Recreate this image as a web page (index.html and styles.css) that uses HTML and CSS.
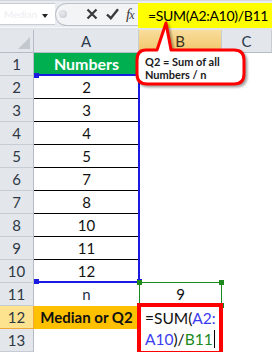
FILE: index.html
```html
<!DOCTYPE html>
<html>
<head>
<meta charset="utf-8">
<link rel="stylesheet" href="styles.css">
</head>
<body>
<div class="page">
  <div class="fbar">
    <div class="namebox"><span class="nb-text">Median</span><span class="nb-arrow"></span></div>
    <div class="tools">
      <span class="grip"></span>
      <svg class="ic ic-x" width="12" height="12" viewBox="0 0 12 12"><path d="M1.5 1.5 L10.5 10.5 M10.5 1.5 L1.5 10.5" stroke="#3a3a3a" stroke-width="2.2" fill="none"/></svg>
      <svg class="ic ic-ok" width="13" height="12" viewBox="0 0 13 12"><path d="M1 6.5 L4.8 10.2 L12 1.2" stroke="#3a3a3a" stroke-width="2.4" fill="none"/></svg>
      <span class="fx">f<span class="fx-x">x</span></span>
    </div>
    <div class="formula">=SUM(A2:A10)/B11</div>
  </div>

  <div class="grid">
    <div class="corner"><span class="tri"></span></div>
    <div class="ch">A</div>
    <div class="ch ch-sel">B</div>
    <div class="ch">C</div>

    <div class="rh">1</div><div class="ca head">Numbers</div><div class="cb"></div><div class="cc"></div>
    <div class="rh">2</div><div class="ca num">2</div><div class="cb"></div><div class="cc"></div>
    <div class="rh">3</div><div class="ca num">3</div><div class="cb"></div><div class="cc"></div>
    <div class="rh">4</div><div class="ca num">4</div><div class="cb"></div><div class="cc"></div>
    <div class="rh">5</div><div class="ca num">5</div><div class="cb"></div><div class="cc"></div>
    <div class="rh">6</div><div class="ca num">7</div><div class="cb"></div><div class="cc"></div>
    <div class="rh">7</div><div class="ca num">8</div><div class="cb"></div><div class="cc"></div>
    <div class="rh">8</div><div class="ca num">10</div><div class="cb"></div><div class="cc"></div>
    <div class="rh">9</div><div class="ca num">11</div><div class="cb"></div><div class="cc"></div>
    <div class="rh">10</div><div class="ca num">12</div><div class="cb"></div><div class="cc"></div>
    <div class="rh">11</div><div class="ca nval">n</div><div class="cb bval">9</div><div class="cc"></div>
    <div class="rh rh-sel">12</div><div class="ca median">Median or Q2</div><div class="cb"></div><div class="cc"></div>
    <div class="rh">13</div><div class="ca"></div><div class="cb"></div><div class="cc"></div>
  </div>

  <div class="range-blue">
    <span class="h h-tl"></span><span class="h h-bl"></span><span class="h h-br"></span>
  </div>
  <div class="range-green">
    <span class="g g-tl"></span><span class="g g-tr"></span><span class="g g-bl"></span><span class="g g-br"></span>
  </div>

  <div class="editor">
    <div class="ed-line"><span class="k">=SUM(</span><span class="r1">A2:</span></div>
    <div class="ed-line"><span class="r1">A10</span><span class="k">)/</span><span class="r2">B11</span><span class="caret"></span></div>
  </div>

  <div class="callout">
    <svg class="callout-shape" width="116" height="70" viewBox="0 0 116 70">
      <path d="M12 30 H23 L32 3 L37 30 H100 Q110 30 110 40 V54 Q110 64 100 64 H13 Q3 64 3 54 V40 Q3 30 12 30 Z" fill="#ffffff" stroke="#ff0000" stroke-width="3" stroke-linejoin="round"/>
    </svg>
    <div class="callout-text">Q2 = Sum of all<br>Numbers / n</div>
  </div>
</div>
</body>
</html>
```

FILE: styles.css
```css
* { box-sizing: border-box; }
html, body { margin: 0; padding: 0; }
body {
  width: 272px;
  height: 352px;
  overflow: hidden;
  background: #dfe3e8;
  font-family: "Lato", "Liberation Sans", sans-serif;
}
.page {
  position: relative;
  width: 272px;
  height: 352px;
}

/* formula bar */
.fbar {
  display: flex;
  align-items: center;
  height: 28px;
  margin-bottom: 2px;
  background: #e8ebef;
  border-top: 1px solid #d3d7dd;
  border-bottom: 1px solid #f6f7f9;
}
.namebox {
  position: relative;
  flex: 0 0 55px;
  height: 22px;
  background: #ffffff;
  border-top: 1px solid #c9cdd3;
  border-bottom: 1px solid #c9cdd3;
}
.nb-text {
  position: absolute;
  left: 4px;
  top: 4px;
  font-size: 10px;
  color: #eceef1;
}
.nb-arrow {
  position: absolute;
  left: 42px;
  top: 10px;
  width: 0;
  height: 0;
  border-left: 3.5px solid transparent;
  border-right: 3.5px solid transparent;
  border-top: 4px solid #222;
}
.tools {
  display: flex;
  align-items: center;
  flex: 0 0 83px;
  height: 23px;
  background: #f3f4f6;
  border: 1px solid #bcc2ca;
  border-right: none;
  border-radius: 12px 0 0 12px;
}
.grip {
  flex: 0 0 8px;
  height: 8px;
  margin-left: 3px;
  border-radius: 50%;
  background: radial-gradient(circle at 40% 35%, #e9ebee, #c3c8cf);
}
.ic { flex: 0 0 auto; }
.ic-x { margin-left: 19px; }
.ic-ok { margin-left: 8px; }
.fx {
  margin-left: 7px;
  font-family: "Liberation Serif", "DejaVu Serif", serif;
  font-style: italic;
  font-size: 15px;
  color: #3a3a3a;
  letter-spacing: -1px;
}
.fx-x { font-size: 12px; }
.formula {
  flex: 1 1 auto;
  min-width: 0;
  overflow: hidden;
  white-space: nowrap;
  height: 25px;
  margin-top: 2px;
  background: #ffff00;
  font-size: 14px;
  letter-spacing: -0.3px;
  line-height: 25px;
  padding-left: 10px;
  color: #000;
}

/* grid */
.grid {
  display: grid;
  grid-template-columns: 34px 105px 83px 1fr;
  grid-template-rows: repeat(14, 23px);
  background: #ffffff;
}
.corner {
  position: relative;
  background: #e3e7ec;
  border-right: 1px solid #b5bcc6;
  border-bottom: 1px solid #b5bcc6;
}
.tri {
  position: absolute;
  right: 3px;
  bottom: 3px;
  width: 0;
  height: 0;
  border-left: 12px solid transparent;
  border-bottom: 12px solid #c3c8cf;
}
.ch {
  background: #e3e7ec;
  border-right: 1px solid #c7ccd4;
  border-bottom: 1px solid #b5bcc6;
  text-align: center;
  font-size: 15px;
  line-height: 22px;
  color: #2c3a4c;
}
.ch-sel {
  background: linear-gradient(#f9dd9c, #f1c66a);
  border-bottom: 1px solid #e4a43a;
  color: #3a3320;
}
.rh {
  background: #e3e7ec;
  border-right: 1px solid #b5bcc6;
  border-bottom: 1px solid #c7ccd4;
  text-align: center;
  font-size: 15px;
  line-height: 22px;
  color: #2f3844;
}
.rh-sel {
  background: #fde38f;
  border-bottom: 1px solid #f0a93a;
  border-right: 1px solid #f0a93a;
}
.ca {
  background: #ffffff;
  text-align: center;
  font-size: 15px;
  line-height: 22px;
  color: #111;
}
.ca.num { border-bottom: 1px solid #000; }
.ca.head {
  background: #00b050;
  color: #ffffff;
  font-weight: bold;
  font-size: 16px;
}
.ca.nval { color: #26314a; }
.ca.median {
  background: #ffc000;
  font-weight: bold;
  color: #111;
  font-size: 15px;
  white-space: nowrap;
}
.cb, .cc { background: #ffffff; }
.bval {
  text-align: center;
  font-size: 15px;
  line-height: 22px;
  color: #111;
}

/* overlays */
.range-blue {
  position: absolute;
  left: 34px;
  top: 74px;
  width: 106px;
  height: 209px;
  border-top: 2px solid #1a1ae0;
  border-right: 2px solid #1a1ae0;
  border-bottom: 2px solid #1a1ae0;
}
.h {
  position: absolute;
  width: 5px;
  height: 5px;
  background: #1a1ae0;
}
.h-tl { left: 0; top: -3px; }
.h-bl { left: 0; bottom: -3px; }
.h-br { right: -4px; bottom: -3px; }

.range-green {
  position: absolute;
  left: 139px;
  top: 282px;
  width: 83px;
  height: 24px;
  border: 1px solid #1c8a1c;
}
.g {
  position: absolute;
  width: 5px;
  height: 5px;
  background: #1c8a1c;
}
.g-tl { left: -3px; top: -3px; }
.g-tr { right: -3px; top: -3px; }
.g-bl { left: -3px; bottom: -3px; }
.g-br { right: -3px; bottom: -3px; }

.editor {
  position: absolute;
  left: 137px;
  top: 303px;
  width: 86px;
  height: 52px;
  background: #ffffff;
  border: 4px solid #ff0000;
  padding: 1px 0 0 4px;
  font-size: 15.5px;
  line-height: 21px;
  color: #111;
  white-space: nowrap;
  overflow: hidden;
}
.ed-line { height: 21px; }
.r1 { color: #3b3bf0; }
.r2 { color: #1c8a1c; }
.caret {
  display: inline-block;
  width: 1px;
  height: 18px;
  margin-left: 1px;
  background: #000;
  vertical-align: -3px;
}

.callout {
  position: absolute;
  left: 134px;
  top: 20px;
  width: 116px;
  height: 70px;
}
.callout-shape {
  display: block;
  filter: drop-shadow(2px 2px 1px rgba(0,0,0,0.35));
}
.callout-text {
  position: absolute;
  left: 11px;
  top: 35px;
  font-size: 11px;
  line-height: 13px;
  font-weight: bold;
  color: #1a1a1a;
  white-space: nowrap;
}
```
